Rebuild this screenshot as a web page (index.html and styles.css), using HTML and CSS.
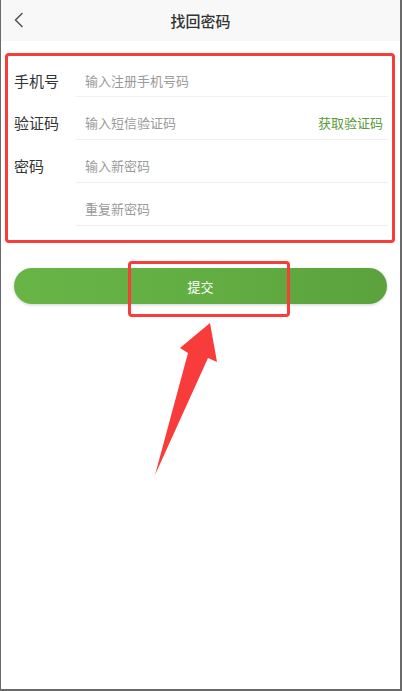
FILE: index.html
```html
<!DOCTYPE html>
<html lang="zh">
<head>
<meta charset="utf-8">
<title>找回密码</title>
<link rel="stylesheet" href="styles.css">
</head>
<body>
<div class="frame">
  <header class="header">
    <span class="back">
      <svg width="12" height="16" viewBox="0 0 12 16"><path d="M9 1.5 L2.5 8 L9 14.5" fill="none" stroke="#555" stroke-width="1.6" stroke-linecap="round" stroke-linejoin="round"/></svg>
    </span>
    <h1 class="title">找回密码</h1>
  </header>

  <section class="form">
    <div class="row first">
      <div class="label">手机号</div>
      <div class="field"><span class="ph">输入注册手机号码</span></div>
    </div>
    <div class="row">
      <div class="label">验证码</div>
      <div class="field"><span class="ph">输入短信验证码</span><span class="code">获取验证码</span></div>
    </div>
    <div class="row">
      <div class="label">密码</div>
      <div class="field"><span class="ph">输入新密码</span></div>
    </div>
    <div class="row">
      <div class="label"></div>
      <div class="field"><span class="ph">重复新密码</span></div>
    </div>
  </section>

  <div class="actions">
    <button class="submit">提交</button>
  </div>

  <div class="mark"></div>
  <svg class="arrow" width="80" height="170" viewBox="0 0 80 170">
    <polygon points="60,3 67,42 58,38 5,155 38,33 30,28" fill="#f83b3b"/>
  </svg>
</div>
</body>
</html>
```

FILE: styles.css
```css
* { box-sizing: border-box; }
html, body { margin: 0; padding: 0; }
body {
  width: 402px;
  height: 691px;
  background: #fff;
  font-family: "Noto Sans CJK SC", "Noto Sans", sans-serif;
  overflow: hidden;
}
.frame {
  position: relative;
  width: 402px;
  height: 691px;
  border-left: 1px solid #6a6a6a;
  border-right: 2px solid #6a6a6a;
  border-bottom: 2px solid #6a6a6a;
}
.header {
  height: 41px;
  background: #f8f8f8;
  display: flex;
  align-items: center;
  justify-content: center;
  position: relative;
}
.back {
  position: absolute;
  left: 12px;
  top: 12px;
  display: flex;
}
.title {
  margin: 0;
  font-size: 15px;
  font-weight: 500;
  color: #333;
  line-height: 20px;
}
.form {
  margin: 12px 0 0 4px;
  width: 390px;
  border: 3px solid #f83b3b;
  border-radius: 4px;
  padding: 0 4px 14px 0;
}
.row {
  display: flex;
}
.label {
  width: 68px;
  padding: 18px 0 8px 6px;
  font-size: 15px;
  line-height: 16px;
  color: #333;
}
.field {
  flex: 1;
  display: flex;
  justify-content: space-between;
  padding: 18px 5px 8px 9px;
  border-bottom: 1px solid #f0f0f0;
  font-size: 13px;
  line-height: 16px;
}
.row.first .label, .row.first .field {
  padding-top: 17px;
  padding-bottom: 7px;
}
.ph { color: #9a9a9a; }
.code { color: #5a9a3a; }
.actions {
  padding: 25px 13px 0 13px;
}
.submit {
  width: 100%;
  height: 36px;
  border: none;
  border-radius: 18px;
  background: linear-gradient(90deg, #68b447 0%, #63ae43 50%, #5ba23d 100%);
  box-shadow: 0 1px 3px rgba(0,0,0,0.18);
  color: #fff;
  font-family: "Noto Sans CJK SC", "Noto Sans", sans-serif;
  font-size: 13px;
  padding: 0;
}
.mark {
  position: absolute;
  left: 127px;
  top: 261px;
  width: 162px;
  height: 56px;
  border: 3px solid #f83b3b;
  border-radius: 4px;
}
.arrow {
  position: absolute;
  left: 149px;
  top: 320px;
}
```
